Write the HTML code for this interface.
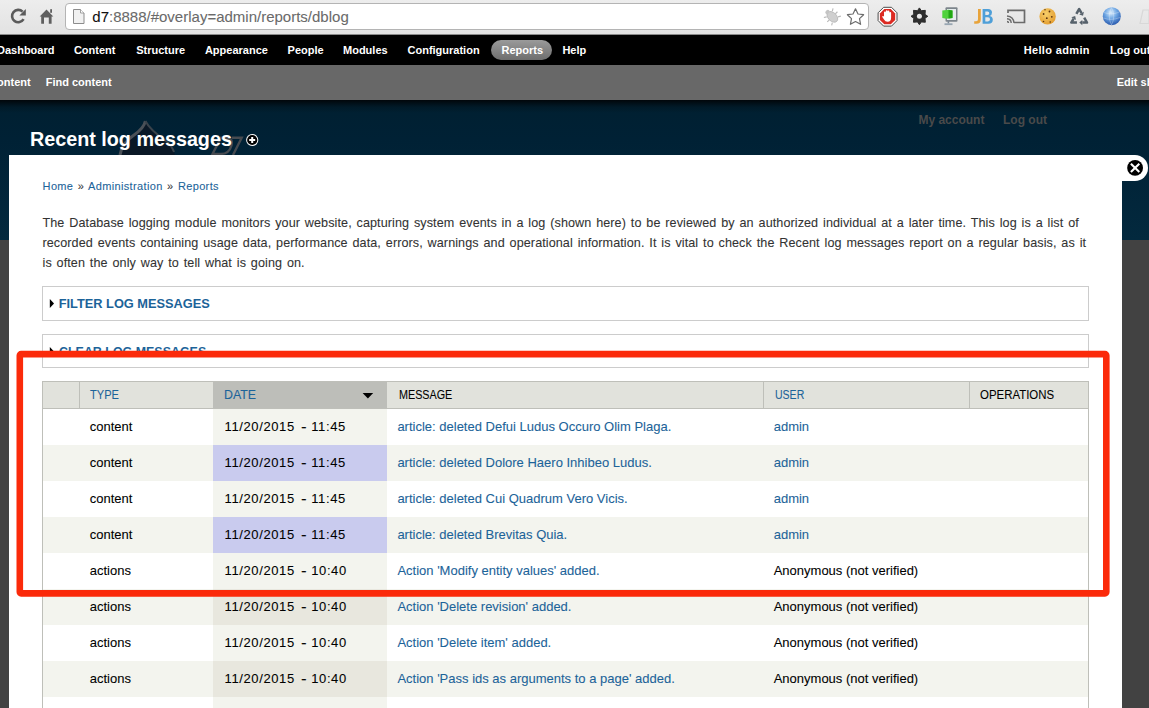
<!DOCTYPE html>
<html><head><meta charset="utf-8"><title>Recent log messages</title>
<style>
html,body{margin:0;padding:0;}
body{width:1149px;height:708px;overflow:hidden;position:relative;background:#424242;font-family:"Liberation Sans", sans-serif;}
.t{position:absolute;white-space:nowrap;line-height:1;font-family:"Liberation Sans", sans-serif;}
.r{position:absolute;}
</style></head><body>
<div class="r" style="left:0px;top:0px;width:1149px;height:35px;background:linear-gradient(#ededed,#e2e2e2);"></div>
<div class="r" style="left:0px;top:34px;width:1149px;height:1px;background:#8a8a8a;"></div>
<div class="r" style="left:65px;top:3px;width:804px;height:27px;background:#fff;border:1px solid #b4b4b4;border-radius:4px;box-sizing:border-box;"></div>
<svg class="r" style="left:0;top:0" width="1149" height="35" viewBox="0 0 1149 35">
<!-- reload -->
<path d="M23.6 19.2 A6.2 6.2 0 1 1 22.6 11.6" fill="none" stroke="#5a5a5a" stroke-width="2.6"/>
<path d="M25.8 9 L25.8 15.6 L19.4 15.4 Z" fill="#5a5a5a"/>
<!-- home -->
<path d="M46.5 9.6 L53.3 16.4 L51.6 16.4 L51.6 23.8 L48.8 23.8 L48.8 17.4 L44 17.4 L44 23.8 L41.2 23.8 L41.2 16.4 L39.7 16.4 Z" fill="#5f5f5f"/>
<rect x="50.2" y="9.2" width="1.8" height="3.6" fill="#5f5f5f"/>
<!-- page icon -->
<path d="M73.5 9.5 L80.5 9.5 L84 13 L84 23.5 L73.5 23.5 Z" fill="#f1f1f1" stroke="#8c8c8c" stroke-width="1"/>
<path d="M80.5 9.5 L80.5 13 L84 13" fill="#fff" stroke="#8c8c8c" stroke-width="0.8"/>
<!-- bug -->
<g transform="rotate(-45 832 16.5)">
<ellipse cx="832" cy="17" rx="4.2" ry="6.3" fill="#cfcfcf" stroke="#b3b3b3" stroke-width="0.8"/>
<ellipse cx="832" cy="10" rx="2.4" ry="1.8" fill="#c4c4c4"/>
<g stroke="#b8b8b8" stroke-width="1.1" fill="none">
<path d="M828 13 L825.5 11.5 M827.8 17 L824.8 17 M828 21 L825.5 22.5 M836 13 L838.5 11.5 M836.2 17 L839.2 17 M836 21 L838.5 22.5"/>
</g></g>
<!-- star -->
<path d="M855.5 8.8 L858 14 L863.6 14.7 L859.5 18.6 L860.6 24.3 L855.5 21.5 L850.4 24.3 L851.5 18.6 L847.4 14.7 L853 14 Z" fill="#fff" stroke="#6c6c6c" stroke-width="1.2" stroke-linejoin="round"/>
<!-- stop sign -->
<path d="M883.6 7.3 L891.5 7.3 L897 12.8 L897 20.6 L891.5 26.1 L883.6 26.1 L878.1 20.6 L878.1 12.8 Z" fill="#fff" stroke="#4a4a4a" stroke-width="1"/>
<path d="M884.3 9.1 L890.8 9.1 L895.2 13.5 L895.2 19.9 L890.8 24.3 L884.3 24.3 L879.9 19.9 L879.9 13.5 Z" fill="#dc2a22"/>
<path d="M884 16.5 L884 12.6 Q884 11.6 884.9 11.6 Q885.8 11.6 885.8 12.6 L885.8 15 L885.8 11.3 Q885.8 10.3 886.7 10.3 Q887.6 10.3 887.6 11.3 L887.6 15 L887.6 11.5 Q887.6 10.6 888.5 10.6 Q889.4 10.6 889.4 11.5 L889.4 15.5 L889.4 12.8 Q889.4 12 890.2 12 Q891.1 12 891.1 12.8 L891.1 17.5 Q891.1 21.8 887.6 21.8 Q885.2 21.8 884 19.6 L882.3 17 Q882 16 883 15.9 Z" fill="#fff"/>
<!-- gear -->
<g transform="translate(919.4 16.3)" fill="#2d2d2d">
<path d="M0 -8.4 L1.9 -5.6 L5.94 -5.94 L5.6 -1.9 L8.4 0 L5.6 1.9 L5.94 5.94 L1.9 5.6 L0 8.4 L-1.9 5.6 L-5.94 5.94 L-5.6 1.9 L-8.4 0 L-5.6 -1.9 L-5.94 -5.94 L-1.9 -5.6 Z" stroke="#2d2d2d" stroke-width="1" stroke-linejoin="round"/>
<circle r="2.5" fill="#e7e7e7"/>
</g>
<!-- network -->
<rect x="945.5" y="7.3" width="12" height="14.5" rx="1" fill="#7d858c"/>
<rect x="947" y="9" width="9" height="11" fill="#e6ecee"/>
<path d="M942.3 10.5 L948.5 9.7 L952.5 10.6 L952.5 18 L946.5 18.8 L942.3 18 Z" fill="#4fd23c"/>
<path d="M948.5 10 L952.5 10.6 L952.5 18 L948.5 18.6 Z" fill="#22a815"/>
<rect x="947.6" y="20.5" width="1.6" height="3" fill="#7b8893"/>
<rect x="944.5" y="23.3" width="8" height="1.8" fill="#98a6b2"/>
<!-- JB -->
<path d="M978 9 L980.8 9 L980.8 19.5 Q980.8 23.8 976.5 23.8 L974.2 23.8 L974.2 21.2 L976.2 21.2 Q978 21.2 978 19.3 Z" fill="#e8a33a"/>
<path d="M982.6 9 L988 9 Q992 9 992 12.6 Q992 15.2 989.8 16 Q992.8 16.8 992.8 19.8 Q992.8 23.8 988.4 23.8 L982.6 23.8 Z M985.3 11.4 L985.3 15 L987.6 15 Q989.3 15 989.3 13.2 Q989.3 11.4 987.6 11.4 Z M985.3 17.3 L985.3 21.4 L988 21.4 Q990 21.4 990 19.35 Q990 17.3 988 17.3 Z" fill="#4e9fd8" fill-rule="evenodd"/>
<!-- cast -->
<path d="M1008 13 L1008 10.3 L1024.5 10.3 L1024.5 22.5 L1014 22.5" fill="none" stroke="#6b6b6b" stroke-width="1.7"/>
<path d="M1007 16 Q1013.5 16.5 1014 23 M1007 18.8 Q1011 19 1011.2 23 M1007 21.5 Q1008.5 21.6 1008.5 23" fill="none" stroke="#6b6b6b" stroke-width="1.4"/>
<!-- cookie -->
<defs><radialGradient id="ck" cx="0.4" cy="0.35" r="0.7"><stop offset="0" stop-color="#f7cf6a"/><stop offset="1" stop-color="#e29b2e"/></radialGradient>
<radialGradient id="gl" cx="0.45" cy="0.3" r="0.75"><stop offset="0" stop-color="#d9ecfb"/><stop offset="0.45" stop-color="#6ea6e3"/><stop offset="1" stop-color="#1f4fa6"/></radialGradient></defs>
<circle cx="1047.6" cy="16.4" r="8.2" fill="url(#ck)"/>
<g fill="#5a3310"><circle cx="1043.6" cy="14" r="0.9"/><circle cx="1049.5" cy="11.5" r="0.9"/><circle cx="1051.8" cy="16.8" r="0.9"/><circle cx="1046.8" cy="18.2" r="0.9"/><circle cx="1050.2" cy="22" r="0.8"/><circle cx="1043.5" cy="21.5" r="0.8"/><circle cx="1045" cy="9.8" r="0.7"/></g>
<!-- recycle -->
<path d="M1076.36 13.90 L1079.20 9.00 L1081.54 13.08" fill="none" stroke="#56616b" stroke-width="2.5" stroke-linejoin="round"/>
<path d="M1083.03 15.68 L1079.20 14.42 L1083.88 11.74 Z" fill="#56616b"/>
<path d="M1084.19 17.70 L1087.00 22.60 L1082.29 22.60" fill="none" stroke="#56616b" stroke-width="2.5" stroke-linejoin="round"/>
<path d="M1079.29 22.60 L1082.29 19.90 L1082.29 25.30 Z" fill="#56616b"/>
<path d="M1076.95 22.60 L1071.30 22.60 L1073.67 18.52" fill="none" stroke="#56616b" stroke-width="2.5" stroke-linejoin="round"/>
<path d="M1075.18 15.93 L1076.00 19.88 L1071.34 17.16 Z" fill="#56616b"/>
<!-- globe -->
<circle cx="1111.8" cy="16.2" r="9" fill="url(#gl)"/>
<path d="M1104 12.5 Q1111 15.5 1119.5 12 M1103.5 18 Q1111 21 1120 17.5 M1111.5 7.5 Q1107 16 1111.5 25 M1111.5 7.5 Q1116 16 1111.5 25" fill="none" stroke="#ffffff" stroke-width="0.6" opacity="0.45"/>
<!-- faint d -->
<path d="M1140 23.5 L1143 10 L1149 10 L1149 23.5 Z" fill="none" stroke="#d8d8d8" stroke-width="1.2"/>
</svg>
<div class="t" style="left:92.30px;top:9.10px;font-size:15px;color:#6a6a6a;font-weight:normal;-webkit-text-stroke:0.08px currentColor;"><span style="color:#111">d7</span>:8888/#overlay=admin/reports/dblog</div>
<div class="r" style="left:0px;top:35px;width:1149px;height:30px;background:#000;"></div>
<div class="r" style="left:0px;top:65px;width:1149px;height:35px;background:#686868;"></div>
<div class="r" style="left:491px;top:40px;width:61px;height:20px;background:linear-gradient(#9a9a9a,#6e6e6e);border-radius:10px;"></div>
<div class="t" style="left:-3.00px;top:44.59px;font-size:11px;color:#fff;font-weight:bold;">Dashboard</div>
<div class="t" style="left:73.90px;top:44.59px;font-size:11px;color:#fff;font-weight:bold;">Content</div>
<div class="t" style="left:136.20px;top:44.59px;font-size:11px;color:#fff;font-weight:bold;">Structure</div>
<div class="t" style="left:204.90px;top:44.59px;font-size:11px;color:#fff;font-weight:bold;">Appearance</div>
<div class="t" style="left:287.60px;top:44.59px;font-size:11px;color:#fff;font-weight:bold;">People</div>
<div class="t" style="left:343.00px;top:44.59px;font-size:11px;color:#fff;font-weight:bold;">Modules</div>
<div class="t" style="left:407.50px;top:44.59px;font-size:11px;color:#fff;font-weight:bold;">Configuration</div>
<div class="t" style="left:501.50px;top:44.59px;font-size:11px;color:#fff;font-weight:bold;">Reports</div>
<div class="t" style="left:562.40px;top:44.59px;font-size:11px;color:#fff;font-weight:bold;">Help</div>
<div class="t" style="left:1023.70px;top:44.59px;font-size:11px;color:#fff;font-weight:bold;letter-spacing:0.35px;">Hello <b>admin</b></div>
<div class="t" style="left:1110.00px;top:44.59px;font-size:11px;color:#fff;font-weight:bold;">Log out</div>
<div class="t" style="left:-33.50px;top:76.69px;font-size:11px;color:#fff;font-weight:bold;">Add content</div>
<div class="t" style="left:45.70px;top:76.69px;font-size:11px;color:#fff;font-weight:bold;">Find content</div>
<div class="t" style="left:1116.70px;top:76.69px;font-size:11px;color:#fff;font-weight:bold;">Edit shortcuts</div>
<div class="r" style="left:0px;top:100px;width:1149px;height:140px;background:linear-gradient(#01060a 0px,#011a28 7px,#002032 13px,#002135 40px,#03293e 140px);"></div>
<div class="r" style="left:0px;top:240px;width:1149px;height:468px;background:#424242;"></div>
<div class="t" style="left:918.40px;top:113.64px;font-size:12px;color:#4a4a4a;font-weight:bold;">My account</div>
<div class="t" style="left:1003.00px;top:113.64px;font-size:12px;color:#4a4a4a;font-weight:bold;">Log out</div>
<svg class="r" style="left:100px;top:110px" width="160" height="50" viewBox="0 0 160 50">
<path d="M45.4 11 Q44 18 34 25 Q22 33 20 45 Q19 50 21 55 L75 55 Q78 42 66 31 Q50 20 45.4 11 Z" fill="#0a1826"/>
<path d="M45.4 11 Q44 18 34 25 Q22 33 20 45 Q19 50 21 55" fill="none" stroke="#4a5057" stroke-width="3"/>
<path d="M45.4 11 Q50 20 66 31 Q72 36 74 42" fill="none" stroke="#3a434b" stroke-width="2"/>
<path d="M121 27.7 L127 27.7 Q133.5 28.5 131.5 35.5 Q129 44 121 44 L112.5 44 Z" fill="none" stroke="#464a50" stroke-width="2.4"/>
<path d="M131.8 27.7 L141.7 27.7 L133 45" fill="none" stroke="#464a50" stroke-width="2.4"/>
</svg>
<div class="t" style="left:29.80px;top:128.22px;font-size:21px;color:#fff;font-weight:bold;transform:scaleX(0.94);transform-origin:0 0;">Recent log messages</div>
<svg class="r" style="left:244px;top:132px" width="16" height="16" viewBox="0 0 16 16">
<circle cx="8.2" cy="8" r="6.1" fill="#fff"/><circle cx="8.2" cy="8" r="5.1" fill="#000"/>
<rect x="5.2" y="7" width="6" height="2" fill="#fff"/><rect x="7.2" y="5" width="2" height="6" fill="#fff"/>
</svg>
<div class="r" style="left:9px;top:155px;width:1113px;height:553px;background:#fff;"></div>
<div class="r" style="left:1110px;top:155px;width:38px;height:26px;background:#fff;border-radius:0 13px 13px 0;"></div>
<svg class="r" style="left:1125px;top:158px" width="20" height="20" viewBox="0 0 20 20">
<circle cx="10.1" cy="9.9" r="7.9" fill="#000"/>
<path d="M5.9 5.7 L14.3 14.1 M14.3 5.7 L5.9 14.1" stroke="#fff" stroke-width="2.1"/>
</svg>
<div class="t" style="left:42.60px;top:180.69px;font-size:11px;color:#333;font-weight:normal;letter-spacing:0.35px;-webkit-text-stroke:0.08px currentColor;word-spacing:1px;"><span style="color:#1c6399">Home</span> » <span style="color:#1c6399">Administration</span> » <span style="color:#1c6399">Reports</span></div>
<div class="t" style="left:42.50px;top:216.53px;font-size:12.6px;color:#333;font-weight:normal;letter-spacing:0.084px;-webkit-text-stroke:0.08px currentColor;word-spacing:1.25px;">The Database logging module monitors your website, capturing system events in a log (shown here) to be reviewed by an authorized individual at a later time. This log is a list of</div>
<div class="t" style="left:42.50px;top:236.53px;font-size:12.6px;color:#333;font-weight:normal;letter-spacing:0.084px;-webkit-text-stroke:0.08px currentColor;word-spacing:1.25px;">recorded events containing usage data, performance data, errors, warnings and operational information. It is vital to check the Recent log messages report on a regular basis, as it</div>
<div class="t" style="left:42.50px;top:256.53px;font-size:12.6px;color:#333;font-weight:normal;letter-spacing:0.084px;-webkit-text-stroke:0.08px currentColor;word-spacing:1.25px;">is often the only way to tell what is going on.</div>
<div class="r" style="left:42px;top:286px;width:1047px;height:35px;background:#fff;border:1px solid #cccccc;box-sizing:border-box;"></div>
<div class="r" style="left:42px;top:334px;width:1047px;height:34px;background:#fff;border:1px solid #cccccc;box-sizing:border-box;"></div>
<svg class="r" style="left:48px;top:296px" width="10" height="60" viewBox="0 0 10 60">
<path d="M1.8 3 L6 7.5 L1.8 12 Z" fill="#000"/>
<path d="M1.8 51 L6 55.5 L1.8 60 Z" fill="#000"/>
</svg>
<div class="t" style="left:58.70px;top:298.06px;font-size:12.8px;color:#1c6399;font-weight:bold;">FILTER LOG MESSAGES</div>
<div class="t" style="left:58.70px;top:345.76px;font-size:12.8px;color:#1c6399;font-weight:bold;transform:scaleX(0.972);transform-origin:0 0;">CLEAR LOG MESSAGES</div>
<div class="r" style="left:42px;top:381px;width:1047px;height:28px;background:#e1e2dc;border:1px solid #bebfb9;box-sizing:border-box;"></div>
<div class="r" style="left:213px;top:382px;width:174px;height:26px;background:#bdbeb9;"></div>
<div class="r" style="left:79px;top:382px;width:1px;height:26px;background:#bebfb9;"></div>
<div class="r" style="left:763px;top:382px;width:1px;height:26px;background:#bebfb9;"></div>
<div class="r" style="left:969px;top:382px;width:1px;height:26px;background:#bebfb9;"></div>
<div class="t" style="left:90.20px;top:389.04px;font-size:12px;color:#1c6399;font-weight:normal;-webkit-text-stroke:0.08px currentColor;transform:scaleX(0.922);transform-origin:0 0;">TYPE</div>
<div class="t" style="left:224.30px;top:389.04px;font-size:12px;color:#1c6399;font-weight:normal;-webkit-text-stroke:0.08px currentColor;transform:scaleX(1.03);transform-origin:0 0;">DATE</div>
<svg class="r" style="left:360px;top:390px" width="16" height="12" viewBox="0 0 16 12">
<path d="M2.6 3 L13.2 3 L7.9 8.6 Z" fill="#000"/>
</svg>
<div class="t" style="left:398.50px;top:389.04px;font-size:12px;color:#000;font-weight:normal;-webkit-text-stroke:0.08px currentColor;transform:scaleX(0.898);transform-origin:0 0;">MESSAGE</div>
<div class="t" style="left:774.50px;top:389.04px;font-size:12px;color:#1c6399;font-weight:normal;-webkit-text-stroke:0.08px currentColor;transform:scaleX(0.877);transform-origin:0 0;">USER</div>
<div class="t" style="left:980.40px;top:389.04px;font-size:12px;color:#000;font-weight:normal;-webkit-text-stroke:0.08px currentColor;transform:scaleX(0.952);transform-origin:0 0;">OPERATIONS</div>
<div class="r" style="left:43px;top:409px;width:1045px;height:36px;background:#fff;"></div>
<div class="r" style="left:213px;top:409px;width:174px;height:36px;background:#f3f4ee;"></div>
<div class="t" style="left:89.70px;top:419.80px;font-size:13px;color:#000;font-weight:normal;-webkit-text-stroke:0.08px currentColor;">content</div>
<div class="t" style="left:224.50px;top:419.80px;font-size:13px;color:#000;font-weight:normal;letter-spacing:0.62px;-webkit-text-stroke:0.08px currentColor;">11/20/2015</div>
<div class="t" style="left:301.00px;top:419.80px;font-size:13px;color:#000;font-weight:normal;-webkit-text-stroke:0.08px currentColor;transform:scaleX(1.3);transform-origin:0 0;">-</div>
<div class="t" style="left:311.20px;top:419.80px;font-size:13px;color:#000;font-weight:normal;letter-spacing:0.62px;-webkit-text-stroke:0.08px currentColor;">11:45</div>
<div class="t" style="left:397.40px;top:419.80px;font-size:13px;color:#1c6399;font-weight:normal;-webkit-text-stroke:0.08px currentColor;">article: deleted Defui Ludus Occuro Olim Plaga.</div>
<div class="t" style="left:773.70px;top:419.80px;font-size:13px;color:#1c6399;font-weight:normal;-webkit-text-stroke:0.08px currentColor;">admin</div>
<div class="r" style="left:43px;top:445px;width:1045px;height:36px;background:#f3f4ee;"></div>
<div class="r" style="left:213px;top:445px;width:174px;height:36px;background:#c9cbee;"></div>
<div class="t" style="left:89.70px;top:455.80px;font-size:13px;color:#000;font-weight:normal;-webkit-text-stroke:0.08px currentColor;">content</div>
<div class="t" style="left:224.50px;top:455.80px;font-size:13px;color:#000;font-weight:normal;letter-spacing:0.62px;-webkit-text-stroke:0.08px currentColor;">11/20/2015</div>
<div class="t" style="left:301.00px;top:455.80px;font-size:13px;color:#000;font-weight:normal;-webkit-text-stroke:0.08px currentColor;transform:scaleX(1.3);transform-origin:0 0;">-</div>
<div class="t" style="left:311.20px;top:455.80px;font-size:13px;color:#000;font-weight:normal;letter-spacing:0.62px;-webkit-text-stroke:0.08px currentColor;">11:45</div>
<div class="t" style="left:397.40px;top:455.80px;font-size:13px;color:#1c6399;font-weight:normal;-webkit-text-stroke:0.08px currentColor;">article: deleted Dolore Haero Inhibeo Ludus.</div>
<div class="t" style="left:773.70px;top:455.80px;font-size:13px;color:#1c6399;font-weight:normal;-webkit-text-stroke:0.08px currentColor;">admin</div>
<div class="r" style="left:43px;top:481px;width:1045px;height:36px;background:#fff;"></div>
<div class="r" style="left:213px;top:481px;width:174px;height:36px;background:#f3f4ee;"></div>
<div class="t" style="left:89.70px;top:491.80px;font-size:13px;color:#000;font-weight:normal;-webkit-text-stroke:0.08px currentColor;">content</div>
<div class="t" style="left:224.50px;top:491.80px;font-size:13px;color:#000;font-weight:normal;letter-spacing:0.62px;-webkit-text-stroke:0.08px currentColor;">11/20/2015</div>
<div class="t" style="left:301.00px;top:491.80px;font-size:13px;color:#000;font-weight:normal;-webkit-text-stroke:0.08px currentColor;transform:scaleX(1.3);transform-origin:0 0;">-</div>
<div class="t" style="left:311.20px;top:491.80px;font-size:13px;color:#000;font-weight:normal;letter-spacing:0.62px;-webkit-text-stroke:0.08px currentColor;">11:45</div>
<div class="t" style="left:397.40px;top:491.80px;font-size:13px;color:#1c6399;font-weight:normal;-webkit-text-stroke:0.08px currentColor;">article: deleted Cui Quadrum Vero Vicis.</div>
<div class="t" style="left:773.70px;top:491.80px;font-size:13px;color:#1c6399;font-weight:normal;-webkit-text-stroke:0.08px currentColor;">admin</div>
<div class="r" style="left:43px;top:517px;width:1045px;height:36px;background:#f3f4ee;"></div>
<div class="r" style="left:213px;top:517px;width:174px;height:36px;background:#c9cbee;"></div>
<div class="t" style="left:89.70px;top:527.80px;font-size:13px;color:#000;font-weight:normal;-webkit-text-stroke:0.08px currentColor;">content</div>
<div class="t" style="left:224.50px;top:527.80px;font-size:13px;color:#000;font-weight:normal;letter-spacing:0.62px;-webkit-text-stroke:0.08px currentColor;">11/20/2015</div>
<div class="t" style="left:301.00px;top:527.80px;font-size:13px;color:#000;font-weight:normal;-webkit-text-stroke:0.08px currentColor;transform:scaleX(1.3);transform-origin:0 0;">-</div>
<div class="t" style="left:311.20px;top:527.80px;font-size:13px;color:#000;font-weight:normal;letter-spacing:0.62px;-webkit-text-stroke:0.08px currentColor;">11:45</div>
<div class="t" style="left:397.40px;top:527.80px;font-size:13px;color:#1c6399;font-weight:normal;-webkit-text-stroke:0.08px currentColor;">article: deleted Brevitas Quia.</div>
<div class="t" style="left:773.70px;top:527.80px;font-size:13px;color:#1c6399;font-weight:normal;-webkit-text-stroke:0.08px currentColor;">admin</div>
<div class="r" style="left:43px;top:553px;width:1045px;height:36px;background:#fff;"></div>
<div class="r" style="left:213px;top:553px;width:174px;height:36px;background:#f3f4ee;"></div>
<div class="t" style="left:89.70px;top:563.80px;font-size:13px;color:#000;font-weight:normal;-webkit-text-stroke:0.08px currentColor;">actions</div>
<div class="t" style="left:224.50px;top:563.80px;font-size:13px;color:#000;font-weight:normal;letter-spacing:0.62px;-webkit-text-stroke:0.08px currentColor;">11/20/2015</div>
<div class="t" style="left:301.00px;top:563.80px;font-size:13px;color:#000;font-weight:normal;-webkit-text-stroke:0.08px currentColor;transform:scaleX(1.3);transform-origin:0 0;">-</div>
<div class="t" style="left:311.20px;top:563.80px;font-size:13px;color:#000;font-weight:normal;letter-spacing:0.62px;-webkit-text-stroke:0.08px currentColor;">10:40</div>
<div class="t" style="left:397.40px;top:563.80px;font-size:13px;color:#1c6399;font-weight:normal;-webkit-text-stroke:0.08px currentColor;">Action 'Modify entity values' added.</div>
<div class="t" style="left:773.70px;top:563.80px;font-size:13px;color:#000;font-weight:normal;-webkit-text-stroke:0.08px currentColor;">Anonymous (not verified)</div>
<div class="r" style="left:43px;top:589px;width:1045px;height:36px;background:#f3f4ee;"></div>
<div class="r" style="left:213px;top:589px;width:174px;height:36px;background:#e8e7de;"></div>
<div class="t" style="left:89.70px;top:599.80px;font-size:13px;color:#000;font-weight:normal;-webkit-text-stroke:0.08px currentColor;">actions</div>
<div class="t" style="left:224.50px;top:599.80px;font-size:13px;color:#000;font-weight:normal;letter-spacing:0.62px;-webkit-text-stroke:0.08px currentColor;">11/20/2015</div>
<div class="t" style="left:301.00px;top:599.80px;font-size:13px;color:#000;font-weight:normal;-webkit-text-stroke:0.08px currentColor;transform:scaleX(1.3);transform-origin:0 0;">-</div>
<div class="t" style="left:311.20px;top:599.80px;font-size:13px;color:#000;font-weight:normal;letter-spacing:0.62px;-webkit-text-stroke:0.08px currentColor;">10:40</div>
<div class="t" style="left:397.40px;top:599.80px;font-size:13px;color:#1c6399;font-weight:normal;-webkit-text-stroke:0.08px currentColor;">Action 'Delete revision' added.</div>
<div class="t" style="left:773.70px;top:599.80px;font-size:13px;color:#000;font-weight:normal;-webkit-text-stroke:0.08px currentColor;">Anonymous (not verified)</div>
<div class="r" style="left:43px;top:625px;width:1045px;height:36px;background:#fff;"></div>
<div class="r" style="left:213px;top:625px;width:174px;height:36px;background:#f3f4ee;"></div>
<div class="t" style="left:89.70px;top:635.80px;font-size:13px;color:#000;font-weight:normal;-webkit-text-stroke:0.08px currentColor;">actions</div>
<div class="t" style="left:224.50px;top:635.80px;font-size:13px;color:#000;font-weight:normal;letter-spacing:0.62px;-webkit-text-stroke:0.08px currentColor;">11/20/2015</div>
<div class="t" style="left:301.00px;top:635.80px;font-size:13px;color:#000;font-weight:normal;-webkit-text-stroke:0.08px currentColor;transform:scaleX(1.3);transform-origin:0 0;">-</div>
<div class="t" style="left:311.20px;top:635.80px;font-size:13px;color:#000;font-weight:normal;letter-spacing:0.62px;-webkit-text-stroke:0.08px currentColor;">10:40</div>
<div class="t" style="left:397.40px;top:635.80px;font-size:13px;color:#1c6399;font-weight:normal;-webkit-text-stroke:0.08px currentColor;">Action 'Delete item' added.</div>
<div class="t" style="left:773.70px;top:635.80px;font-size:13px;color:#000;font-weight:normal;-webkit-text-stroke:0.08px currentColor;">Anonymous (not verified)</div>
<div class="r" style="left:43px;top:661px;width:1045px;height:36px;background:#f3f4ee;"></div>
<div class="r" style="left:213px;top:661px;width:174px;height:36px;background:#e8e7de;"></div>
<div class="t" style="left:89.70px;top:671.80px;font-size:13px;color:#000;font-weight:normal;-webkit-text-stroke:0.08px currentColor;">actions</div>
<div class="t" style="left:224.50px;top:671.80px;font-size:13px;color:#000;font-weight:normal;letter-spacing:0.62px;-webkit-text-stroke:0.08px currentColor;">11/20/2015</div>
<div class="t" style="left:301.00px;top:671.80px;font-size:13px;color:#000;font-weight:normal;-webkit-text-stroke:0.08px currentColor;transform:scaleX(1.3);transform-origin:0 0;">-</div>
<div class="t" style="left:311.20px;top:671.80px;font-size:13px;color:#000;font-weight:normal;letter-spacing:0.62px;-webkit-text-stroke:0.08px currentColor;">10:40</div>
<div class="t" style="left:397.40px;top:671.80px;font-size:13px;color:#1c6399;font-weight:normal;-webkit-text-stroke:0.08px currentColor;">Action 'Pass ids as arguments to a page' added.</div>
<div class="t" style="left:773.70px;top:671.80px;font-size:13px;color:#000;font-weight:normal;-webkit-text-stroke:0.08px currentColor;">Anonymous (not verified)</div>
<div class="r" style="left:43px;top:697px;width:1045px;height:36px;background:#fff;"></div>
<div class="r" style="left:213px;top:697px;width:174px;height:36px;background:#f3f4ee;"></div>
<div class="t" style="left:89.70px;top:707.80px;font-size:13px;color:#000;font-weight:normal;-webkit-text-stroke:0.08px currentColor;">actions</div>
<div class="t" style="left:224.50px;top:707.80px;font-size:13px;color:#000;font-weight:normal;letter-spacing:0.62px;-webkit-text-stroke:0.08px currentColor;">11/20/2015</div>
<div class="t" style="left:301.00px;top:707.80px;font-size:13px;color:#000;font-weight:normal;-webkit-text-stroke:0.08px currentColor;transform:scaleX(1.3);transform-origin:0 0;">-</div>
<div class="t" style="left:311.20px;top:707.80px;font-size:13px;color:#000;font-weight:normal;letter-spacing:0.62px;-webkit-text-stroke:0.08px currentColor;">10:40</div>
<div class="t" style="left:397.40px;top:707.80px;font-size:13px;color:#1c6399;font-weight:normal;-webkit-text-stroke:0.08px currentColor;">Action 'Unpublish comment' added.</div>
<div class="t" style="left:773.70px;top:707.80px;font-size:13px;color:#000;font-weight:normal;-webkit-text-stroke:0.08px currentColor;">Anonymous (not verified)</div>
<div class="r" style="left:42px;top:409px;width:1px;height:299px;background:#bebfb9;"></div>
<div class="r" style="left:1088px;top:409px;width:1px;height:299px;background:#bebfb9;"></div>
<svg class="r" style="left:0;top:0" width="1149" height="708" viewBox="0 0 1149 708">
<rect x="19.8" y="354.1" width="1086.5" height="239.3" rx="1.3" ry="1.3" fill="none" stroke="#fb2a0a" stroke-width="6.6"/>
</svg>
</body></html>
